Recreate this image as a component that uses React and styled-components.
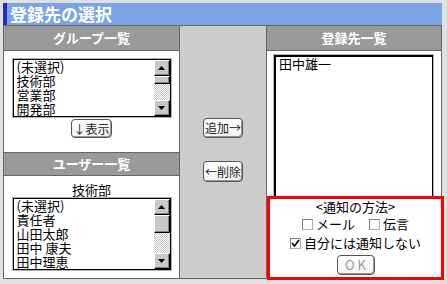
import React from 'react';
import styled, { createGlobalStyle } from 'styled-components';

const Global = createGlobalStyle`
  html, body { margin: 0; padding: 0; background: #e0e0e0; }
  body { font-family: "Noto Sans CJK JP", "Noto Sans", sans-serif; font-size: 13px; color: #000; }
  * { box-sizing: border-box; }
`;

const Page = styled.div`
  width: 447px;
  height: 284px;
  padding: 3px 0 0 3px;
  background: #e0e0e0;
  overflow: hidden;
`;

const Window = styled.div`
  width: 439px;
`;

const TitleBar = styled.h1`
  margin: 0;
  height: 22px;
  background: #7ba4e8;
  border-left: 4px solid #2a2ab4;
  color: #fff;
  font-size: 17px;
  font-weight: 700;
  line-height: 22px;
  padding-left: 3px;
  white-space: nowrap;
`;

const Main = styled.div`
  display: grid;
  grid-template-columns: 175px 86px 174px;
  gap: 1px;
  padding: 1px;
  background: #666;
  height: 254px;
`;

const Column = styled.div`
  display: flex;
  flex-direction: column;
  background: ${p => p.$bg || '#fff'};
  min-height: 0;
`;

const Header = styled.div`
  height: ${p => p.$h}px;
  flex: none;
  background: #999;
  color: #fff;
  font-weight: bold;
  font-size: 13px;
  text-align: center;
  line-height: ${p => p.$h}px;
  border-bottom: 1px solid #666;
  border-top: ${p => (p.$top ? '1px solid #666' : 'none')};
  box-sizing: content-box;
`;

const Section = styled.div`
  display: flex;
  flex-direction: column;
  align-items: center;
  padding-top: ${p => p.$pt}px;
  height: ${p => (p.$h ? `${p.$h}px` : 'auto')};
  flex: ${p => (p.$h ? 'none' : '1')};
  min-height: 0;
`;

const Label = styled.div`
  height: 14px;
  line-height: 14px;
  font-size: 13px;
`;

const ListFrame = styled.div`
  width: ${p => p.$w}px;
  height: ${p => p.$h}px;
  flex: none;
  border: 1px solid #b4b4b4;
  background: #fff;
  display: flex;
`;

const ListInner = styled.div`
  flex: 1;
  display: flex;
  border: 1px solid #000;
  border-top-width: ${p => (p.$thick ? 2 : 1)}px;
  border-left-width: ${p => (p.$thick ? 2 : 1)}px;
  min-height: 0;
`;

const Items = styled.div`
  flex: 1;
  padding-left: 3px;
`;

const Item = styled.div`
  height: 14px;
  line-height: 14px;
  font-size: 13px;
  white-space: nowrap;
`;

const ScrollBar = styled.div`
  width: 16px;
  display: flex;
  flex-direction: column;
  flex: none;
`;

const Bevel = styled.div`
  height: ${p => p.$h}px;
  flex: none;
  background: #c8c8c8;
  border-top: 1px solid #fff;
  border-left: 1px solid #fff;
  border-right: 1px solid #000;
  border-bottom: 1px solid #000;
  box-shadow: inset -1px -1px 0 #808080;
  display: flex;
  align-items: center;
  justify-content: center;
`;

const Track = styled.div`
  flex: 1;
  background: repeating-conic-gradient(#c4c4c4 0 25%, #fff 0 50%) 0 0 / 2px 2px;
`;

const Arrow = ({ down }) => (
  <svg width="7" height="4" viewBox="0 0 7 4">
    {down ? <polygon points="0,0 7,0 3.5,4" fill="#000" /> : <polygon points="0,4 7,4 3.5,0" fill="#000" />}
  </svg>
);

const Btn = styled.button`
  font-family: inherit;
  font-size: 12px;
  color: #222;
  height: ${p => p.$h || 20}px;
  min-width: ${p => p.$w || 39}px;
  padding: 0 1px;
  margin-top: ${p => p.$mt || 0}px;
  background: linear-gradient(#fff, #f2f2f2);
  border: 1px solid #555;
  border-radius: 4px;
  box-shadow: inset -1px -1px 0 #999;
  line-height: 16px;
  white-space: nowrap;
  cursor: pointer;
`;

const OkBtn = styled(Btn)`
  color: #999;
  font-size: 13px;
  letter-spacing: 3px;
  padding-left: 4px;
`;

const Middle = styled(Column)`
  align-items: center;
  padding-top: 92px;
  gap: 23px;
`;

const RightBody = styled.div`
  flex: 1;
  min-height: 0;
  padding: 3px 0 0 6px;
`;

const Notice = styled.section`
  height: 84px;
  flex: none;
  margin: 0 -3px -2px 0;
  border: 3px solid #ff0000;
  background: #fff;
  display: flex;
  flex-direction: column;
  align-items: center;
  position: relative;
  z-index: 1;
`;

const NoticeRow = styled.div`
  display: flex;
  align-items: center;
  height: 14px;
  line-height: 14px;
  font-size: 13px;
  margin-top: ${p => p.$mt}px;
  gap: ${p => p.$gap || 0}px;
  white-space: nowrap;
`;

const Check = styled.label`
  display: flex;
  align-items: center;
  gap: 3px;
`;

const Box = styled.span`
  width: 11px;
  height: 11px;
  border: 1px solid #808080;
  border-right-color: #b0b0b0;
  border-bottom-color: #b0b0b0;
  background: #fff;
  display: flex;
  align-items: center;
  justify-content: center;
`;

const CheckBox = ({ checked, children }) => (
  <Check>
    <Box>
      {checked && (
        <svg width="9" height="9" viewBox="0 0 9 9">
          <polyline points="1,4 3.5,7 8,1" fill="none" stroke="#000" strokeWidth="1.6" />
        </svg>
      )}
    </Box>
    <span>{children}</span>
  </Check>
);

const ListBox = ({ items, w, h, thumb, scroll = true }) => (
  <ListFrame $w={w} $h={h}>
    <ListInner $thick={!scroll}>
      <Items>
        {items.map(i => (
          <Item key={i}>{i}</Item>
        ))}
      </Items>
      {scroll && (
        <ScrollBar>
          <Bevel $h={16}><Arrow /></Bevel>
          <Bevel $h={thumb} />
          <Track />
          <Bevel $h={16}><Arrow down /></Bevel>
        </ScrollBar>
      )}
    </ListInner>
  </ListFrame>
);

export default function App() {
  return (
    <Page>
      <Global />
      <Window>
        <TitleBar>登録先の選択</TitleBar>
        <Main>
          <Column>
            <Header $h={24}>グループ一覧</Header>
            <Section $pt={7} $h={101}>
              <ListBox w={160} h={60} thumb={8} items={['(未選択)', '技術部', '営業部', '開発部']} />
              <Btn $mt={1} $h={19}>↓表示</Btn>
            </Section>
            <Header $h={22} $top>ユーザー一覧</Header>
            <Section $pt={7}>
              <Label>技術部</Label>
              <ListBox w={160} h={74} thumb={18} items={['(未選択)', '責任者', '山田太郎', '田中 康夫', '田中理恵']} />
            </Section>
          </Column>
          <Middle $bg="#cccccc">
            <Btn>追加→</Btn>
            <Btn $h={21}>←削除</Btn>
          </Middle>
          <Column>
            <Header $h={24}>登録先一覧</Header>
            <RightBody>
              <ListBox w={161} h={146} scroll={false} items={['田中雄一']} />
            </RightBody>
            <Notice>
              <NoticeRow $mt={1}>&lt;通知の方法&gt;</NoticeRow>
              <NoticeRow $mt={3} $gap={14}>
                <CheckBox>メール</CheckBox>
                <CheckBox>伝言</CheckBox>
              </NoticeRow>
              <NoticeRow $mt={5}>
                <CheckBox checked>自分には通知しない</CheckBox>
              </NoticeRow>
              <OkBtn $mt={5} $w={38}>OK</OkBtn>
            </Notice>
          </Column>
        </Main>
      </Window>
    </Page>
  );
}
